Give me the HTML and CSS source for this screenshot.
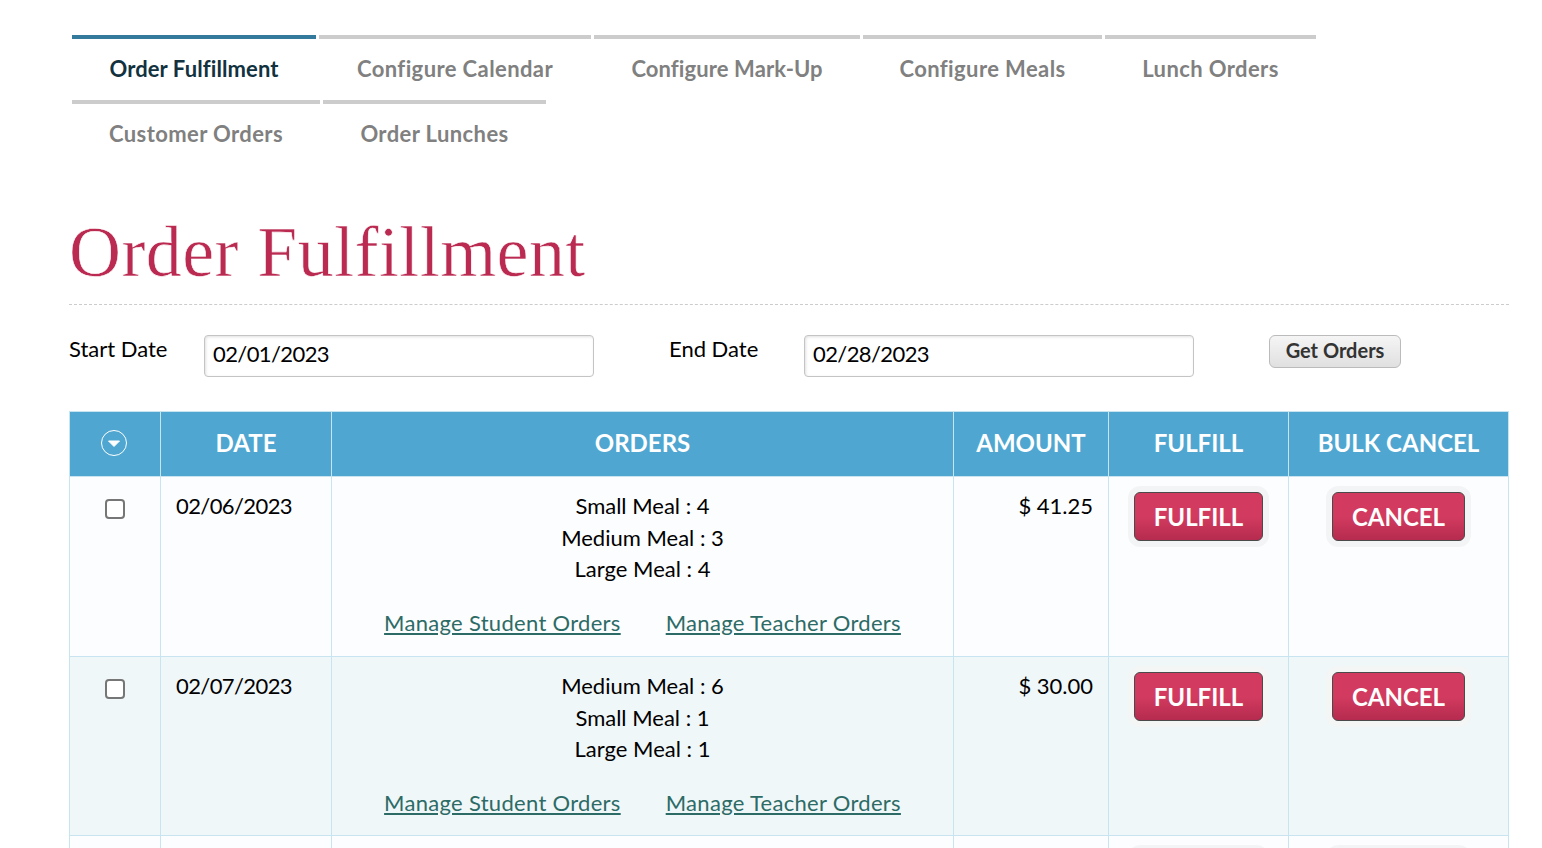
FILE: index.html
```html
<!DOCTYPE html>
<html lang="en">
<head>
    <meta charset="UTF-8">
    <title>Order Fulfillment</title>
    <link rel="stylesheet" href="styles.css">
</head>
<body>
<div class="container">
    <ul class="tabs">
        <li class="tab tab-active"><a href="#">Order Fulfillment</a></li>
        <li class="tab"><a href="#">Configure Calendar</a></li>
        <li class="tab tab-tight"><a href="#">Configure Mark-Up</a></li>
        <li class="tab"><a href="#">Configure Meals</a></li>
        <li class="tab"><a href="#">Lunch Orders</a></li>
        <li class="tab"><a href="#">Customer Orders</a></li>
        <li class="tab"><a href="#">Order Lunches</a></li>
    </ul>

    <h1 class="page-title">Order Fulfillment</h1>

    <form class="filters">
        <label class="filter-label" for="startDate">Start Date</label>
        <input class="filter-input" id="startDate" type="text" value="02/01/2023">
        <label class="filter-label filter-label-end" for="endDate">End Date</label>
        <input class="filter-input" id="endDate" type="text" value="02/28/2023">
        <button class="get-orders" type="button">Get Orders</button>
    </form>

    <table class="orders">
        <colgroup>
            <col class="col-check">
            <col class="col-date">
            <col class="col-orders">
            <col class="col-amount">
            <col class="col-fulfill">
            <col class="col-cancel">
        </colgroup>
        <thead>
            <tr>
                <th>
                    <svg class="select-all" width="26" height="26" viewBox="0 0 26 26">
                        <circle cx="13" cy="13" r="12.5" fill="none" stroke="#fff" stroke-width="1"/>
                        <path d="M7.5 11h11l-5.5 5.5z" fill="#fff" stroke="#fff" stroke-width="1" stroke-linejoin="round"/>
                    </svg>
                </th>
                <th>DATE</th>
                <th>ORDERS</th>
                <th>AMOUNT</th>
                <th>FULFILL</th>
                <th>BULK CANCEL</th>
            </tr>
        </thead>
        <tbody>
            <tr>
                <td class="cell-check"><span class="checkbox"></span></td>
                <td class="cell-date">02/06/2023</td>
                <td class="cell-orders">
                    <div class="meal">Small Meal : 4</div>
                    <div class="meal">Medium Meal : 3</div>
                    <div class="meal">Large Meal : 4</div>
                    <div class="manage-links">
                        <a href="#">Manage Student Orders</a>
                        <a href="#">Manage Teacher Orders</a>
                    </div>
                </td>
                <td class="cell-amount">$ 41.25</td>
                <td class="cell-action"><button class="action-button action-fulfill" type="button">FULFILL</button></td>
                <td class="cell-action"><button class="action-button action-cancel" type="button">CANCEL</button></td>
            </tr>
            <tr class="row-short">
                <td class="cell-check"><span class="checkbox"></span></td>
                <td class="cell-date">02/07/2023</td>
                <td class="cell-orders">
                    <div class="meal">Medium Meal : 6</div>
                    <div class="meal">Small Meal : 1</div>
                    <div class="meal">Large Meal : 1</div>
                    <div class="manage-links">
                        <a href="#">Manage Student Orders</a>
                        <a href="#">Manage Teacher Orders</a>
                    </div>
                </td>
                <td class="cell-amount">$ 30.00</td>
                <td class="cell-action"><button class="action-button action-fulfill" type="button">FULFILL</button></td>
                <td class="cell-action"><button class="action-button action-cancel" type="button">CANCEL</button></td>
            </tr>
            <tr>
                <td class="cell-check"><span class="checkbox"></span></td>
                <td class="cell-date"></td>
                <td class="cell-orders"></td>
                <td class="cell-amount"></td>
                <td class="cell-action"><button class="action-button action-fulfill" type="button" aria-label="Fulfill"></button></td>
                <td class="cell-action"><button class="action-button action-cancel" type="button" aria-label="Cancel"></button></td>
            </tr>
        </tbody>
    </table>
</div>
</body>
</html>
```

FILE: styles.css
```css
* {
    box-sizing: border-box;
}

html, body {
    height: 100%;
    overflow: hidden;
}

body {
    margin: 0;
    font-family: Lato, "Open Sans", Arial, sans-serif;
    font-size: 22px;
    color: #000;
    background-color: #fff;
}

.container {
    width: 1440px;
    margin-left: 69px;
    padding-top: 35px;
}

.tabs {
    display: flex;
    flex-wrap: wrap;
    gap: 0 3px;
    width: 1250px;
    height: 130px;
    margin: 0 0 0 3px;
    padding: 0;
    list-style: none;
}

.tab {
    height: 65px;
    border-top: 4px solid #ccc;
    font-size: 22px;
    font-weight: 700;
    line-height: 60px;
    letter-spacing: 0.4px;
    text-align: center;
}

.tab:nth-child(1) { width: 244px; }
.tab:nth-child(2) { width: 272px; }
.tab:nth-child(3) { width: 266px; }
.tab:nth-child(4) { width: 239px; }
.tab:nth-child(5) { width: 211px; }
.tab:nth-child(6) { width: 248px; }
.tab:nth-child(7) { width: 223px; }

.tab a {
    color: #808080;
    text-decoration: none;
}

.tab-tight {
    letter-spacing: 0.1px;
}

.tab-active {
    border-top-color: #337a9c;
    letter-spacing: 0.1px;
}

.tab-active a {
    color: #12323f;
}

.page-title {
    height: 140px;
    margin: 0;
    padding-top: 49px;
    border-bottom: 1px dashed #ccc;
    font-family: "Liberation Serif", serif;
    font-size: 72px;
    font-weight: 400;
    line-height: 76px;
    letter-spacing: 0.4px;
    color: #bb2a50;
    -webkit-text-stroke: 0.6px #fff;
}

.filters {
    display: flex;
    align-items: flex-start;
    height: 106px;
    padding-top: 30px;
}

.filter-label {
    width: 135px;
    line-height: 28px;
}

.filter-label-end {
    width: 135px;
    margin-left: 75px;
}

.filter-input {
    width: 390px;
    height: 42px;
    padding: 0 8px 5px;
    font-family: inherit;
    font-size: 22px;
    letter-spacing: -0.6px;
    color: #000;
    background-color: #fff;
    border: 1px solid #c4c4c4;
    border-radius: 4px;
    box-shadow: inset 1px 1px 3px rgba(0, 0, 0, 0.12);
}

.get-orders {
    width: 132px;
    height: 33px;
    margin-left: 75px;
    padding: 0 0 3px;
    font-family: inherit;
    font-size: 20px;
    font-weight: 700;
    color: #333;
    background: linear-gradient(#f5f5f5, #e0e0e0);
    border: 1px solid #bbb;
    border-radius: 6px;
}

.orders {
    width: 1439px;
    table-layout: fixed;
    border-collapse: collapse;
}

.col-check { width: 91px; }
.col-date { width: 171px; }
.col-orders { width: 622px; }
.col-amount { width: 155px; }
.col-fulfill { width: 180px; }
.col-cancel { width: 220px; }

.orders th {
    height: 65px;
    padding: 0 0 4px;
    font-size: 24px;
    font-weight: 700;
    color: #fff;
    text-align: center;
    background-color: #4fa7d1;
    border: 1px solid #c9e4f1;
}

.select-all {
    display: block;
    margin: 2px auto 0;
    transform: translateX(-1px);
}

.orders td {
    height: 180px;
    padding: 13px 15px 0;
    line-height: 31.5px;
    vertical-align: top;
    border: 1px solid #c9e4f1;
}

.orders .row-short td {
    height: 179px;
}

.orders tbody tr:nth-child(odd) {
    background-color: #fcfdfe;
}

.orders tbody tr:nth-child(even) {
    background-color: #f0f7f9;
}

.cell-check {
    text-align: center;
}

.checkbox {
    display: block;
    width: 20px;
    height: 20px;
    margin: 9px auto 0;
    background-color: #fff;
    border: 2px solid #767676;
    border-radius: 4px;
}

.orders td.cell-date {
    letter-spacing: -0.6px;
}

.cell-orders {
    text-align: center;
}

.manage-links {
    display: flex;
    justify-content: center;
    gap: 45px;
    margin-top: 22px;
    letter-spacing: 0.3px;
}

.manage-links a {
    color: #2d6b66;
}

.cell-amount {
    text-align: right;
}

.cell-action {
    text-align: center;
}

.orders td.cell-action {
    padding: 15px 0 0;
}

.action-button {
    height: 49px;
    padding: 0;
    font-family: inherit;
    font-size: 24px;
    font-weight: 700;
    color: #fff;
    background: linear-gradient(#d23b5f 0%, #d23b5f 50%, #b52b4f 100%);
    border: 1px solid #4a4a4a;
    border-radius: 6px;
    box-shadow: 0 0 0 6px rgba(0, 0, 0, 0.035);
}

.action-fulfill {
    width: 129px;
}

.action-cancel {
    width: 133px;
}

.orders tbody tr:nth-child(even) .action-button {
    box-shadow: 0 0 0 6px rgba(255, 240, 235, 0.25);
}
```
